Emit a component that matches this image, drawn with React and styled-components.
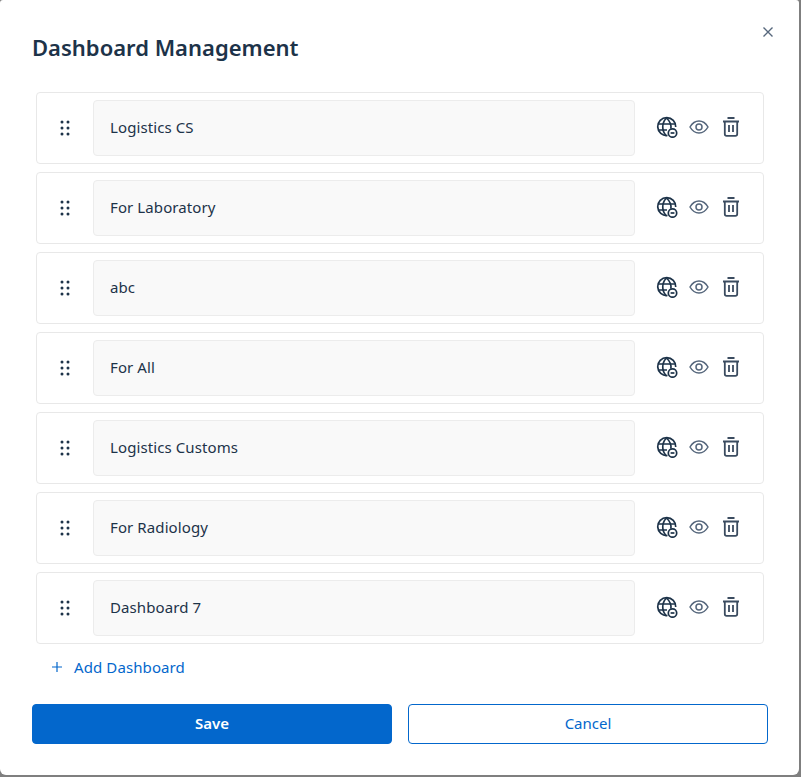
import React from "react";
import styled, { createGlobalStyle } from "styled-components";

const GlobalStyle = createGlobalStyle`
  html, body {
    margin: 0;
    padding: 0;
    background: #7f7f7f;
  }
  body {
    font-family: "Noto Sans", "Open Sans", sans-serif;
  }
`;

const Modal = styled.div`
  box-sizing: border-box;
  position: relative;
  width: 799px;
  height: 775px;
  padding: 32px 31px 0 32px;
  background: #fff;
  border-radius: 3px 3px 6px 6px;
`;

const Title = styled.h2`
  margin: 0 0 28px;
  height: 32px;
  font-size: 22px;
  line-height: 31px;
  font-weight: 600;
  color: #1d3349;
`;

const CloseButton = styled.button`
  position: absolute;
  top: 25px;
  right: 24px;
  width: 14px;
  height: 14px;
  padding: 0;
  border: 0;
  background: none;
  display: flex;
`;

const List = styled.div`
  display: flex;
  flex-direction: column;
  gap: 8px;
  margin: 0 4px;
`;

const Row = styled.div`
  box-sizing: border-box;
  display: flex;
  align-items: center;
  height: 72px;
  padding: 0 7px 0 0;
  border: 1px solid #e8e8e8;
  border-radius: 4px;
`;

const Handle = styled.div`
  display: grid;
  grid-template-columns: 3px 3px;
  grid-auto-rows: 3px;
  gap: 3px;
  width: 56px;
  justify-content: center;
  transform: translate(-0.5px, -0.5px);
`;

const Dot = styled.span`
  width: 3px;
  height: 3px;
  border-radius: 50%;
  background: #1d3349;
`;

const NameBox = styled.div`
  box-sizing: border-box;
  flex: 0 0 542px;
  height: 56px;
  display: flex;
  align-items: center;
  padding: 0 16px 3px;
  background: #f9f9f9;
  border: 1px solid #ececec;
  border-radius: 4px;
  font-size: 15px;
  letter-spacing: 0.1px;
  color: #1d3349;
`;

const Actions = styled.div`
  display: flex;
  align-items: center;
  gap: 11px;
  margin-left: 21px;
  margin-bottom: 2px;
`;

const AddButton = styled.button`
  display: flex;
  align-items: center;
  gap: 11px;
  height: 20px;
  margin: 13px 0 0 19px;
  padding: 0 0 1px;
  border: 0;
  background: none;
  font: inherit;
  font-size: 15px;
  letter-spacing: 0.1px;
  color: #0367cc;
`;

const Footer = styled.div`
  display: grid;
  grid-template-columns: 360px 360px;
  gap: 16px;
  margin-top: 27px;
`;

const FooterButton = styled.button`
  box-sizing: border-box;
  height: 40px;
  padding: 0 0 3px;
  border-radius: 4px;
  border: 1px solid #0367cc;
  font: inherit;
  font-size: 15px;
  font-weight: ${(p) => (p.$primary ? 600 : 400)};
  background: ${(p) => (p.$primary ? "#0367cc" : "#fff")};
  color: ${(p) => (p.$primary ? "#fff" : "#0367cc")};
`;

const GlobeIcon = () => (
  <svg width="22" height="22" viewBox="0 0 22 22" fill="none" stroke="#1d3349" strokeWidth="1.7">
    <path d="M11.500 19.500A9 9 0 1 1 19.700 11" />
    <path d="M2 8h17.500M2 14h9" />
    <path d="M10.500 2C5.500 7 5.500 15 10.500 20M10.500 2c3.600 3.400 4.800 7.600 4.400 10.500" />
    <circle cx="16.500" cy="17" r="4.200" fill="#fff" />
    <path d="M14.600 17h3.800" />
  </svg>
);

const EyeIcon = () => (
  <svg width="20" height="20" viewBox="0 0 20 20" fill="none" stroke="#56677c" strokeWidth="1.5">
    <path d="M1 10c2.300-4 5.300-6 9-6s6.700 2 9 6c-2.300 4-5.300 6-9 6s-6.700-2-9-6z" />
    <circle cx="10" cy="10" r="3" />
  </svg>
);

const TrashIcon = () => (
  <svg width="22" height="22" viewBox="0 0 22 22" fill="none" stroke="#3b4c60" strokeWidth="1.8">
    <path d="M3 5.500h16M7.500 2h7" />
    <path d="M4.800 5.500v12.500a1.800 1.800 0 0 0 1.800 1.800h8.800a1.800 1.800 0 0 0 1.800-1.800V5.500" />
    <path d="M9 9v7M13 9v7" />
  </svg>
);

const dashboards = [
  "Logistics CS",
  "For Laboratory",
  "abc",
  "For All",
  "Logistics Customs",
  "For Radiology",
  "Dashboard 7",
];

export default function App() {
  return (
    <>
      <GlobalStyle />
      <Modal>
        <CloseButton aria-label="Close">
          <svg width="14" height="14" viewBox="0 0 14 14" fill="none" stroke="#56677c" strokeWidth="1.4">
            <path d="M2.500 2.500l9 9M11.500 2.500l-9 9" />
          </svg>
        </CloseButton>
        <Title>Dashboard Management</Title>
        <List>
          {dashboards.map((name) => (
            <Row key={name}>
              <Handle>
                {Array.from({ length: 6 }).map((_, i) => (
                  <Dot key={i} />
                ))}
              </Handle>
              <NameBox>{name}</NameBox>
              <Actions>
                <GlobeIcon />
                <EyeIcon />
                <TrashIcon />
              </Actions>
            </Row>
          ))}
        </List>
        <AddButton>
          <svg width="12" height="12" viewBox="0 0 12 12" fill="none" stroke="#0367cc" strokeWidth="1.200">
            <path d="M6 1v10M1 6h10" />
          </svg>
          Add Dashboard
        </AddButton>
        <Footer>
          <FooterButton $primary>Save</FooterButton>
          <FooterButton>Cancel</FooterButton>
        </Footer>
      </Modal>
    </>
  );
}
